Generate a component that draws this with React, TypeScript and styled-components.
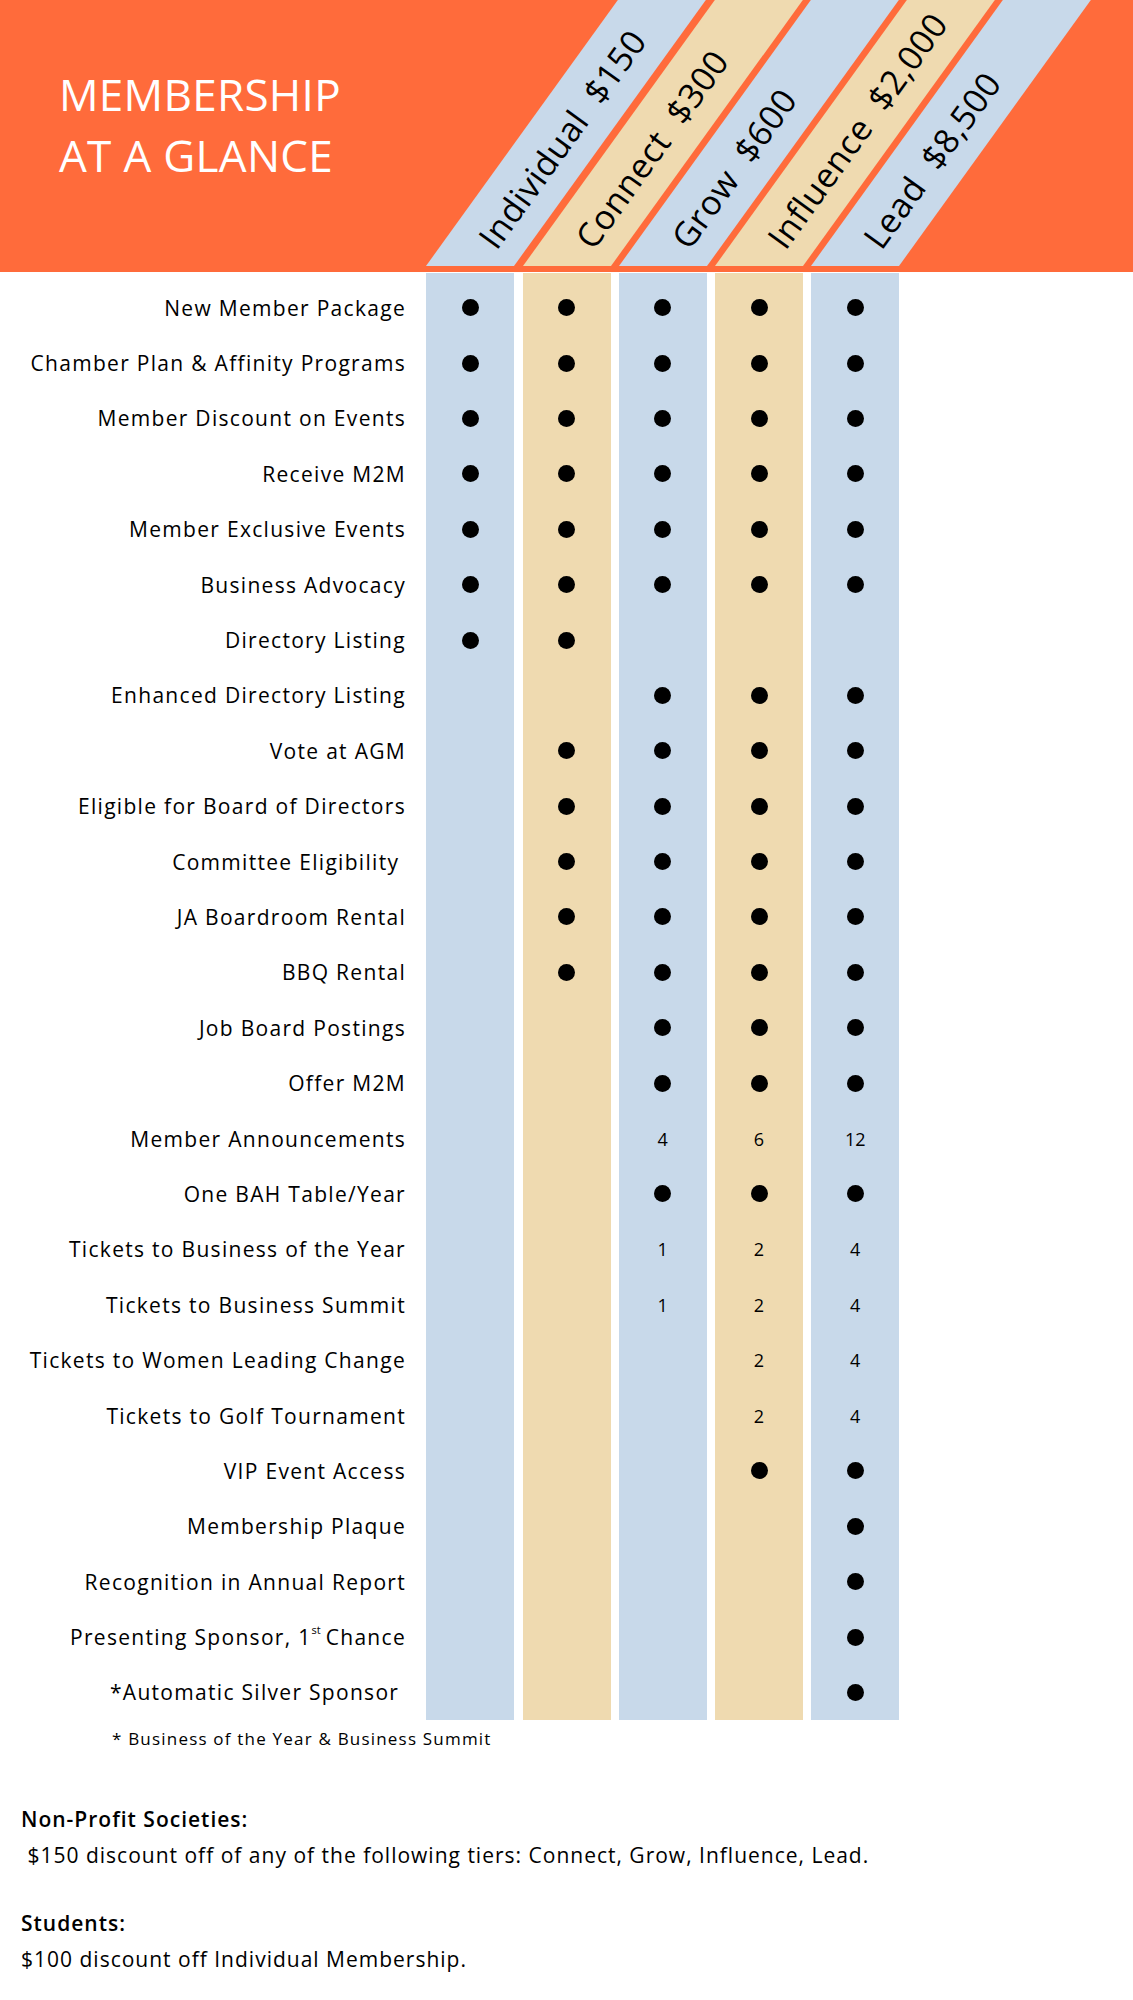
import styled, { createGlobalStyle } from "styled-components"

const ORANGE = "#FF6B3B"
const BLUE = "#C8D9EA"
const TAN = "#EFDAB0"
const GRID = "418px repeat(5, 88px)"

const GlobalStyle = createGlobalStyle`
  body {
    margin: 0;
    background: #fff;
    color: #000;
    font-family: "Open Sans", "Noto Sans", sans-serif;
  }
`

const Header = styled.header`
  display: grid;
  grid-template-columns: ${GRID};
  column-gap: 8.25px;
  height: 272px;
  padding-bottom: 6px;
  box-sizing: border-box;
  background: ${ORANGE};
  overflow: hidden;
`

const Title = styled.h1`
  margin: 0;
  padding: 64px 0 0 59px;
  font-size: 44px;
  line-height: 61px;
  font-weight: 500;
  letter-spacing: 0.3px;
  color: #fff;
`

const Stripe = styled.div`
  position: relative;
  height: 266px;
  align-self: end;
`

const StripeShape = styled.div<{ $tone: string }>`
  position: absolute;
  inset: 0;
  background: ${p => p.$tone};
  transform: skewX(-35.8deg);
  transform-origin: bottom;
`

const StripeLabel = styled.span`
  position: absolute;
  left: calc(50% + 16px);
  bottom: 5px;
  font-size: 34px;
  line-height: 34px;
  letter-spacing: 0.6px;
  white-space: pre;
  transform-origin: 0 50%;
  transform: rotate(-54.2deg);
`

const Table = styled.div`
  display: grid;
  grid-template-columns: ${GRID};
  column-gap: 8.25px;
  margin-top: 1px;
`

const Labels = styled.div`
  display: flex;
  flex-direction: column;
  align-items: flex-end;
  padding: 7px 12px 0 0;
`

const Label = styled.div`
  height: 55.4px;
  display: flex;
  align-items: center;
  font-size: 21px;
  letter-spacing: 1.3px;
  white-space: pre;
`

const Sup = styled.span`
  font-size: 11px;
  letter-spacing: 0;
  align-self: flex-start;
  margin-top: 13px;
  margin-right: 5px;
`

const TierCol = styled.div<{ $tone: string }>`
  display: flex;
  flex-direction: column;
  padding-top: 7px;
  background: ${p => p.$tone};
`

const Cell = styled.div`
  height: 55.4px;
  display: flex;
  align-items: center;
  justify-content: center;
  font-size: 18px;
`

const Dot = styled.span`
  width: 17px;
  height: 17px;
  border-radius: 50%;
  background: #000;
`

const Note = styled.p`
  margin: 8px 0 0 112px;
  font-size: 17px;
  line-height: 22px;
  letter-spacing: 1.2px;
`

const Notes = styled.section`
  display: flex;
  flex-direction: column;
  gap: 32px;
  padding: 51px 0 0 21px;
`

const NoteGroup = styled.div`
  font-size: 21px;
  line-height: 36px;
  letter-spacing: 1px;
  white-space: pre;
  p {
    margin: 0;
  }
  strong {
    font-weight: 600;
  }
`

const tiers = [
  { name: "Individual  $150", tone: BLUE },
  { name: "Connect  $300", tone: TAN },
  { name: "Grow  $600", tone: BLUE },
  { name: "Influence  $2,000", tone: TAN },
  { name: "Lead  $8,500", tone: BLUE },
]

// 1 = dot, 0 = nothing, string = count
type V = 0 | 1 | string

const rows: { label: string; sup?: string; rest?: string; v: V[] }[] = [
  { label: "New Member Package", v: [1, 1, 1, 1, 1] },
  { label: "Chamber Plan & Affinity Programs", v: [1, 1, 1, 1, 1] },
  { label: "Member Discount on Events", v: [1, 1, 1, 1, 1] },
  { label: "Receive M2M", v: [1, 1, 1, 1, 1] },
  { label: "Member Exclusive Events", v: [1, 1, 1, 1, 1] },
  { label: "Business Advocacy", v: [1, 1, 1, 1, 1] },
  { label: "Directory Listing", v: [1, 1, 0, 0, 0] },
  { label: "Enhanced Directory Listing", v: [0, 0, 1, 1, 1] },
  { label: "Vote at AGM", v: [0, 1, 1, 1, 1] },
  { label: "Eligible for Board of Directors", v: [0, 1, 1, 1, 1] },
  { label: "Committee Eligibility\u00a0", v: [0, 1, 1, 1, 1] },
  { label: "JA Boardroom Rental", v: [0, 1, 1, 1, 1] },
  { label: "BBQ Rental", v: [0, 1, 1, 1, 1] },
  { label: "Job Board Postings", v: [0, 0, 1, 1, 1] },
  { label: "Offer M2M", v: [0, 0, 1, 1, 1] },
  { label: "Member Announcements", v: [0, 0, "4", "6", "12"] },
  { label: "One BAH Table/Year", v: [0, 0, 1, 1, 1] },
  { label: "Tickets to Business of the Year", v: [0, 0, "1", "2", "4"] },
  { label: "Tickets to Business Summit", v: [0, 0, "1", "2", "4"] },
  { label: "Tickets to Women Leading Change", v: [0, 0, 0, "2", "4"] },
  { label: "Tickets to Golf Tournament", v: [0, 0, 0, "2", "4"] },
  { label: "VIP Event Access", v: [0, 0, 0, 1, 1] },
  { label: "Membership Plaque", v: [0, 0, 0, 0, 1] },
  { label: "Recognition in Annual Report", v: [0, 0, 0, 0, 1] },
  { label: "Presenting Sponsor, 1", sup: "st", rest: "Chance", v: [0, 0, 0, 0, 1] },
  { label: "*Automatic Silver Sponsor\u00a0", v: [0, 0, 0, 0, 1] },
]

export default function App() {
  return (
    <>
      <GlobalStyle />
      <Header>
        <Title>
          MEMBERSHIP
          <br />
          AT A GLANCE
        </Title>
        {tiers.map(t => (
          <Stripe key={t.name}>
            <StripeShape $tone={t.tone} />
            <StripeLabel>{t.name}</StripeLabel>
          </Stripe>
        ))}
      </Header>

      <Table>
        <Labels>
          {rows.map(r => (
            <Label key={r.label}>
              {r.label}
              {r.sup && <Sup>{r.sup}</Sup>}
              {r.rest}
            </Label>
          ))}
        </Labels>
        {tiers.map((t, i) => (
          <TierCol key={t.name} $tone={t.tone}>
            {rows.map(r => (
              <Cell key={r.label}>
                {r.v[i] === 1 ? <Dot /> : r.v[i] === 0 ? null : r.v[i]}
              </Cell>
            ))}
          </TierCol>
        ))}
      </Table>

      <Note>* Business of the Year &amp; Business Summit</Note>

      <Notes>
        <NoteGroup>
          <p><strong>Non-Profit Societies:</strong></p>
          <p> $150 discount off of any of the following tiers: Connect, Grow, Influence, Lead.</p>
        </NoteGroup>
        <NoteGroup>
          <p><strong>Students:</strong></p>
          <p>$100 discount off Individual Membership.</p>
        </NoteGroup>
      </Notes>
    </>
  )
}
